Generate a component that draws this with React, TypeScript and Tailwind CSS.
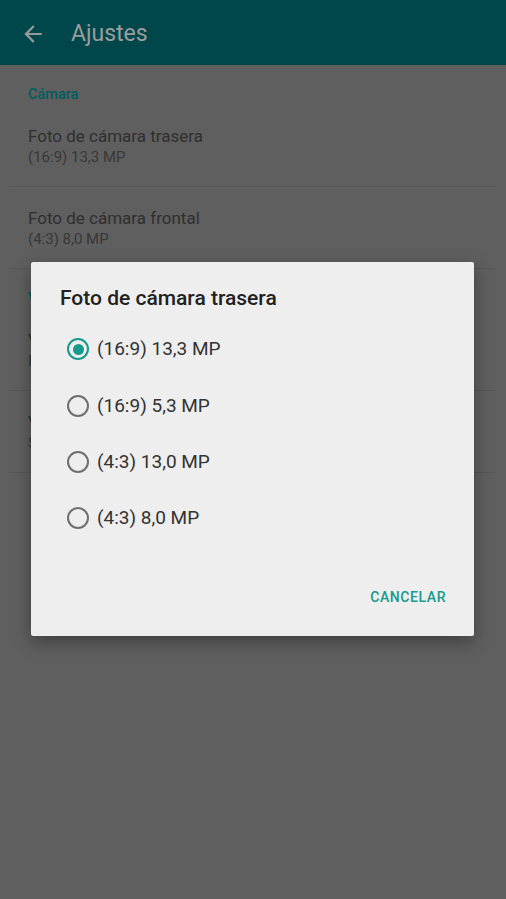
import React from "react";

const font = { fontFamily: "Roboto, 'Noto Sans', sans-serif" };

const sections = [
  {
    title: "Cámara",
    items: [
      { label: "Foto de cámara trasera", value: "(16:9) 13,3 MP" },
      { label: "Foto de cámara frontal", value: "(4:3) 8,0 MP" },
    ],
  },
  {
    title: "Vídeo",
    items: [
      { label: "Vídeo de cámara trasera", value: "Full HD 1080p" },
      { label: "Vídeo de cámara frontal", value: "SD 480p" },
    ],
  },
];

const options = ["(16:9) 13,3 MP", "(16:9) 5,3 MP", "(4:3) 13,0 MP", "(4:3) 8,0 MP"];

function Radio({ checked }: { checked: boolean }) {
  return (
    <span
      className={
        checked
          ? "flex h-[22px] w-[22px] shrink-0 items-center justify-center rounded-full border-2 border-[#17998b]"
          : "flex h-[22px] w-[22px] shrink-0 items-center justify-center rounded-full border-2 border-[#6f6f6f]"
      }
    >
      {checked && <span className="h-[11px] w-[11px] rounded-full bg-[#17998b]" />}
    </span>
  );
}

export default function App() {
  return (
    <div className="relative h-[899px] w-full overflow-hidden bg-[#5f5f5f]" style={font}>
      {/* barra superior */}
      <div className="flex h-[65px] items-center bg-[#00474c] pt-[3px]">
        <svg viewBox="0 0 24 24" className="ml-[20px] h-[26px] w-[26px]" fill="#9a9a9a">
          <path d="M20 11H7.83l5.59-5.59L12 4l-8 8 8 8 1.41-1.41L7.83 13H20v-2z" />
        </svg>
        <span className="ml-[25px] text-[23px] text-[#9c9c9c]">Ajustes</span>
      </div>

      {/* lista de ajustes */}
      {sections.map((s) => (
        <div key={s.title}>
          <div className="px-[28px] pt-[20px] text-[14.5px] leading-[20px] font-medium text-[#005d60]">
            {s.title}
          </div>
          {s.items.map((it) => (
            <div key={it.label} className="mx-[9px] border-b border-[#575757] px-[19px] pt-[20px] pb-[19px]">
              <div className="text-[17px] leading-[22px] text-[#2f2f2f]">{it.label}</div>
              <div className="text-[15px] leading-[20px] text-[#383838]">{it.value}</div>
            </div>
          ))}
        </div>
      ))}

      {/* diálogo */}
      <div className="absolute left-[31px] top-[262px] flex h-[374px] w-[443px] flex-col rounded-[2px] bg-[#eeeeee] shadow-[0_6px_18px_rgba(0,0,0,0.35)]">
        <div className="px-[29px] pt-[24px] text-[21px] leading-[24px] font-medium text-[#212121]">
          Foto de cámara trasera
        </div>
        <div className="mt-[11px] flex flex-col">
          {options.map((o, i) => (
            <div key={o} className="flex h-[56.4px] items-center px-[36px]">
              <Radio checked={i === 0} />
              <span className="ml-[8px] text-[19px] leading-[24px] text-[#333333]">{o}</span>
            </div>
          ))}
        </div>
        <div className="mt-auto flex justify-end px-[28px] pb-[28px]">
          <span className="text-[14px] font-medium tracking-[0.04em] text-[#17998b]">CANCELAR</span>
        </div>
      </div>
    </div>
  );
}
